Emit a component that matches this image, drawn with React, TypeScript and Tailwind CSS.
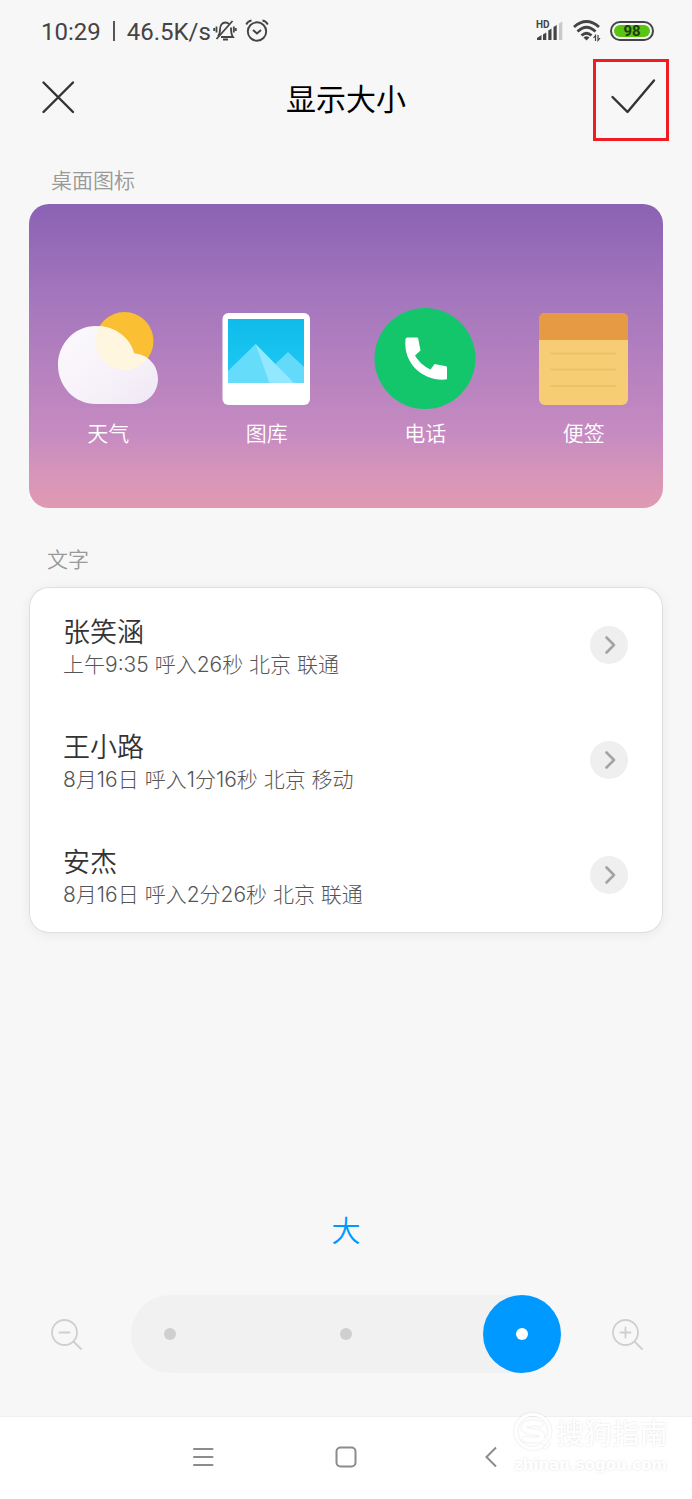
import React, { useState } from 'react';

const sizes = ['小', '标准', '大'];

const calls = [
    { id: 1, name: '张笑涵', detail: '上午9:35 呼入26秒 北京 联通' },
    { id: 2, name: '王小路', detail: '8月16日 呼入1分16秒 北京 移动' },
    { id: 3, name: '安杰', detail: '8月16日 呼入2分26秒 北京 联通' },
];

const WeatherIcon: React.FC = () => (
    <svg width="102" height="102" viewBox="0 0 102 102">
        <defs>
            <clipPath id="cloud">
                <path d="M39 19C58 19 73.500 31 77 46.500C91 47.500 101 58 101 72C101 86 90 97 77 97H39C17 97 1 79 1 58C1 37 17 19 39 19Z" />
            </clipPath>
            <linearGradient id="cloudFill" x1="0" y1="0" x2="1" y2="1">
                <stop offset="0" stopColor="#fbfafd" />
                <stop offset="0.5" stopColor="#f8f3fa" />
                <stop offset="1" stopColor="#efe8f4" />
            </linearGradient>
        </defs>
        <circle cx="67.500" cy="34" r="29" fill="#fabf32" />
        <path
            d="M39 19C58 19 73.500 31 77 46.500C91 47.500 101 58 101 72C101 86 90 97 77 97H39C17 97 1 79 1 58C1 37 17 19 39 19Z"
            fill="url(#cloudFill)"
        />
        <circle cx="67.500" cy="34" r="29" fill="#fff6e0" clipPath="url(#cloud)" />
    </svg>
);

const GalleryIcon: React.FC = () => (
    <svg width="102" height="102" viewBox="0 0 102 102">
        <defs>
            <linearGradient id="sky" x1="0" y1="0" x2="0" y2="1">
                <stop offset="0" stopColor="#0fbbe9" />
                <stop offset="1" stopColor="#20caf5" />
            </linearGradient>
        </defs>
        <rect x="6.500" y="6" width="87.500" height="92" rx="6" fill="#fff" />
        <rect x="12" y="12" width="76" height="64" fill="url(#sky)" />
        <path d="M55 61L72 45L88 60V76H55Z" fill="#63dafa" />
        <path d="M12 64L39.500 37L78 76H12Z" fill="#66dcfb" />
        <path d="M39.500 37L78 76H53.500Z" fill="#92e8ff" />
    </svg>
);

const PhoneIcon: React.FC = () => (
    <svg width="102" height="102" viewBox="0 0 102 102">
        <circle cx="51" cy="51.500" r="50.500" fill="#13c66b" />
        <path
            d="M33.500 30.500H43Q44 30.500 44.200 31.500L46.500 43.500L41 48.500C44.500 54.500 50 59.500 56.500 62.500L60.500 57L72 59.200Q73 59.500 73 60.500V71.500Q73 72.500 72 72.500C50 74.500 29 57.500 31.500 32.500Q31.500 30.500 33.500 30.500Z"
            fill="#fff"
        />
    </svg>
);

const NotesIcon: React.FC = () => (
    <svg width="102" height="102" viewBox="0 0 102 102">
        <rect x="6" y="6" width="89" height="92" rx="6" fill="#f6cd74" />
        <path d="M6 33V12Q6 6 12 6H89Q95 6 95 12V33Z" fill="#e79a44" />
        <path d="M17 46.500H83M17 62.500H83M17 79H83" stroke="#efbd62" strokeWidth="1.500" />
    </svg>
);

const apps = [
    { label: '天气', icon: <WeatherIcon /> },
    { label: '图库', icon: <GalleryIcon /> },
    { label: '电话', icon: <PhoneIcon /> },
    { label: '便签', icon: <NotesIcon /> },
];

const StatusBar: React.FC = () => (
    <div className="flex h-[59px] items-center justify-between pt-[3px] pr-[38px] pl-[41px] text-[#444]">
        <div className="flex items-center">
            <span className="pt-px font-[Roboto] text-[24px] leading-7">10:29</span>
            <span className="mx-3 h-5 w-[2px] bg-[#555]" />
            <span className="pt-px font-[Roboto] text-[24px] leading-7">46.5K/s</span>
            <svg className="ml-[2px]" width="24" height="24" viewBox="0 0 24 24" fill="none" stroke="currentColor" strokeWidth="1.800">
                <path d="M5 17.500C7 15.500 7 13 7 10.500C7 6.500 9 3.500 12.500 3.500C14 3.500 15 4 16 5M18 8.500C18 13.500 18 15.500 20 18H8" />
                <path d="M3.500 20L19.500 2M10 20.500H15" />
                <path d="M3.500 7.500V13.500M1.200 9V12M20.800 7.500V13.500M22.800 9V12" />
            </svg>
            <svg className="ml-2" width="24" height="24" viewBox="0 0 24 24" fill="none" stroke="currentColor" strokeWidth="1.900">
                <circle cx="12" cy="12.500" r="9.200" />
                <path d="M8 11L12 14.500L16 11" />
                <path d="M1.200 5.500Q3 2 6.500 1.500M22.800 5.500Q21 2 17.500 1.500" />
            </svg>
        </div>

        <div className="flex items-center">
            <div className="relative h-5 w-[27px]">
                <svg width="27" height="20" viewBox="0 0 27 20" fill="currentColor">
                    <path d="M1 19V17L5.500 14V19ZM7 13.500L10.300 11.500V19H7ZM12.300 9.500L15.500 7.500V19H12.300ZM17.500 6L20.700 4V19H17.500Z" />
                    <path d="M23 2.500L26.300 0.500V19H23Z" fill="#c8c8c8" />
                </svg>
                <span className="absolute -top-px left-0 font-[Roboto] text-[10px] leading-[10px] font-bold">HD</span>
            </div>
            <svg className="ml-[10px]" width="28" height="22" viewBox="0 0 28 22" fill="none" stroke="currentColor" strokeWidth="2.800">
                <path d="M1 7Q13.500 -4 26 7" />
                <path d="M4.500 11.500Q13.500 3 22.500 11.500" />
                <path d="M8.500 15.500Q13.500 11 18.500 15.500" />
                <path d="M10.500 17.500Q13.500 15 16.500 17.500L13.500 20.500Z" fill="currentColor" stroke="none" />
                <path d="M22.500 21V15.500L20.500 18M25 15V20.500L27 18" strokeWidth="1.200" />
            </svg>
            <div className="ml-[9px] h-5 w-11 rounded-full border-2 border-[#444] p-[2px]">
                <div className="flex h-full items-center justify-center rounded-full bg-[#57c512] font-[Roboto] text-[15px] leading-none font-bold text-[#233b10]">
                    98
                </div>
            </div>
        </div>
    </div>
);

const Watermark: React.FC = () => (
    <div className="pointer-events-none absolute -top-1 right-6 text-white drop-shadow-[0_0_1px_rgba(0,0,0,0.12)]">
        <div className="flex items-center gap-1">
            <svg width="38" height="38" viewBox="0 0 38 38" fill="none" stroke="currentColor">
                <path d="M29 32A17 17 0 1 1 34 26" strokeWidth="3" />
                <path d="M28 11.500C22 9.500 10 9 10 14.500C10 20 28 17.500 28 23C28 28.500 15 27.500 9 25.500" strokeWidth="5" />
                <path d="M30 35Q34 34 35 29" strokeWidth="2" />
            </svg>
            <span className="text-[28px] leading-9">搜狗指南</span>
        </div>
        <div className="font-['DejaVu_Sans'] text-[15px] leading-7 font-bold">zhinan.sogou.com</div>
    </div>
);

const App: React.FC = () => {
    const [size, setSize] = useState<number>(2);

    return (
        <div className="flex min-h-screen flex-col bg-[#f7f7f7] font-['Noto_Sans_CJK_SC',sans-serif]">
            <StatusBar />

            <header className="flex items-center justify-between px-[23px] text-[#333]">
                <button title="取消" className="h-[82px] w-[76px]">
                    <svg width="76" height="76" viewBox="0 0 76 76" fill="none" stroke="currentColor" strokeWidth="2.400" strokeLinecap="round">
                        <path d="M20.500 20.500L50 50M50 20.500L20.500 50" />
                    </svg>
                </button>
                <h1 className="pb-[6px] text-[30px] leading-9 font-normal text-black">显示大小</h1>
                <button title="确定" className="h-[82px] w-[76px] border-[3px] border-[#f01c24]">
                    <svg width="70" height="76" viewBox="0 0 70 76" fill="none" stroke="currentColor" strokeWidth="2.400" strokeLinecap="round" strokeLinejoin="round">
                        <path d="M16.500 35L31.500 50L58 18.500" />
                    </svg>
                </button>
            </header>

            <main className="flex flex-1 flex-col px-[29px]">
                <h2 className="mt-[23px] pl-[22px] text-[21px] leading-[30px] font-[350] text-[#999]">桌面图标</h2>
                <section className="mt-[10px] grid grid-cols-4 rounded-[20px] bg-linear-[180deg,#8a62b4_0%,#a577bd_32%,#c68bc1_76%,#d896b8_90%,#e09ab1_100%] pt-[103px] pb-16">
                    {apps.map((app) => (
                        <div key={app.label} className="flex flex-col items-center gap-[11px]">
                            {app.icon}
                            <span className="text-[21px] leading-6 font-[350] text-white">{app.label}</span>
                        </div>
                    ))}
                </section>

                <h2 className="mt-[35px] pl-[18px] text-[21px] leading-[30px] font-[350] text-[#999]">文字</h2>
                <ul className="mt-[14px] rounded-[20px] bg-white pb-px shadow-[0_2px_12px_rgba(0,0,0,0.06)] ring-1 ring-[#dedede] ring-inset">
                    {calls.map((call) => (
                        <li key={call.id} className="flex h-[115px] items-center justify-between pr-[35px] pl-[34px]">
                            <div className="flex flex-col gap-[2px] pt-[2px]">
                                <div className="text-[27px] leading-9 font-[350] text-[#333]">{call.name}</div>
                                <div className="font-[Inter,'Noto_Sans_CJK_SC',sans-serif] text-[21px] leading-7 font-light text-[#555]">
                                    {call.detail}
                                </div>
                            </div>
                            <button title="详情" className="flex size-[38px] items-center justify-center rounded-full bg-[#efefef]">
                                <svg width="38" height="38" viewBox="0 0 38 38" fill="none" stroke="#a3a3a3" strokeWidth="2.600" strokeLinecap="round" strokeLinejoin="round">
                                    <path d="M16.500 11.500L24 19L16.500 26.500" />
                                </svg>
                            </button>
                        </li>
                    ))}
                </ul>
            </main>

            <section className="px-[49px] pb-[43px]">
                <div className="text-center text-[29px] leading-8 font-[350] text-[#0099ff]">{sizes[size]}</div>
                <div className="mt-[50px] flex items-center gap-12 text-[#cfcfcf]">
                    <button title="缩小" onClick={() => setSize(Math.max(0, size - 1))}>
                        <svg width="34" height="34" viewBox="0 0 34 34" fill="none" stroke="currentColor" strokeWidth="1.800" strokeLinecap="round">
                            <circle cx="15.500" cy="15.500" r="12.500" />
                            <path d="M24.500 24.500L32 32M10.500 15.500H20.500" />
                        </svg>
                    </button>
                    <div className="relative flex flex-1">
                        <input
                            type="range"
                            aria-label="显示大小"
                            min={0}
                            max={2}
                            value={size}
                            onChange={(e) => setSize(Number(e.target.value))}
                            className="h-[78px] w-full appearance-none rounded-full bg-[#f1f1f1] outline-none [&::-webkit-slider-thumb]:size-[78px] [&::-webkit-slider-thumb]:appearance-none [&::-webkit-slider-thumb]:rounded-full [&::-webkit-slider-thumb]:bg-[#0099ff]"
                        />
                        <div className="pointer-events-none absolute inset-0 flex items-center justify-between px-[33px]">
                            {sizes.map((item, index) => (
                                <span
                                    key={item}
                                    className={`size-3 rounded-full ${index === size ? 'bg-white' : 'bg-[#cfcfcf]'}`}
                                />
                            ))}
                        </div>
                    </div>
                    <button title="放大" onClick={() => setSize(Math.min(2, size + 1))}>
                        <svg width="34" height="34" viewBox="0 0 34 34" fill="none" stroke="currentColor" strokeWidth="1.800" strokeLinecap="round">
                            <circle cx="16.500" cy="15.500" r="12.500" />
                            <path d="M25.500 24.500L33 32M11.500 15.500H21.500M16.500 10.500V20.500" />
                        </svg>
                    </button>
                </div>
            </section>

            <nav className="relative flex h-[83px] items-center justify-center gap-24 border-t border-[#f0f0f0] bg-white pb-[2px] text-[#8c8c8c]">
                <button title="菜单" className="flex size-12 items-center justify-center">
                    <svg width="24" height="24" viewBox="0 0 24 24" stroke="currentColor" strokeWidth="2" strokeLinecap="round">
                        <path d="M4 4H22.500M4 12H22.500M4 20H22.500" />
                    </svg>
                </button>
                <button title="主页" className="flex size-12 items-center justify-center">
                    <svg width="24" height="24" viewBox="0 0 24 24" fill="none" stroke="currentColor" strokeWidth="2">
                        <rect x="2.500" y="2.500" width="19" height="19" rx="4" />
                    </svg>
                </button>
                <button title="返回" className="flex size-12 items-center justify-center">
                    <svg width="24" height="24" viewBox="0 0 24 24" fill="none" stroke="currentColor" strokeWidth="2">
                        <path d="M18 2.500L8.500 12L18 21.500" />
                    </svg>
                </button>
                <Watermark />
            </nav>
        </div>
    );
};

export default App;
